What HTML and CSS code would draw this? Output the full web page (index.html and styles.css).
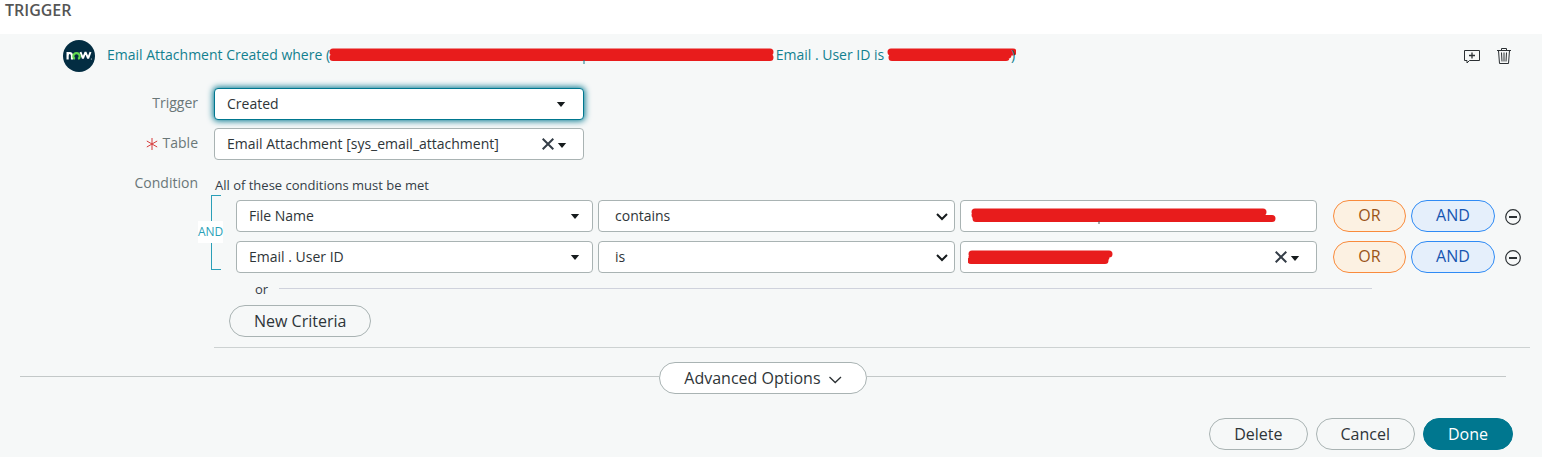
FILE: index.html
```html
<!DOCTYPE html>
<html lang="en">
<head>
    <meta charset="UTF-8">
    <meta name="viewport" content="width=device-width, initial-scale=1.0">
    <title>Trigger</title>
    <link rel="stylesheet" href="styles.css">
</head>
<body>

<h1>TRIGGER</h1>

<form class="panel">
    <div class="summary">
        <svg class="logo" viewBox="0 0 32 32" role="img" aria-label="now">
            <circle cx="16" cy="16" r="16" fill="#032d42"/>
            <g fill="none" stroke="#fff" stroke-width="2.200">
                <path d="M4.600 19.500v-7.500M4.600 16c0-4 4.400-4 4.400 0v3.500"/>
                <path d="M17.500 12l2.400 6.500 2.600-6.500 2.600 6.500 2.400-6.500" stroke-linejoin="bevel" stroke-width="2"/>
            </g>
            <path d="M11.800 19a3.200 3.200 0 1 1 3.400 0" fill="none" stroke="#62d84e" stroke-width="2.200"/>
            <circle cx="28.300" cy="19" r=".5" fill="#fff"/>
        </svg>
        <a href="#" class="summary-text">Email Attachment Created where (<svg class="mark mark-long" viewBox="0 0 447 16">
            <path d="M5 4H442M5 9.500H442" />
            <path class="tick" d="M256 12v4"/>
        </svg> Email . User ID is <svg class="mark mark-short" viewBox="0 0 130 16">
            <path d="M5 4H127M6 9.500H120M7 7H122"/>
        </svg>)</a>
        <button type="button" class="icon-btn" aria-label="Add comment">
            <svg width="16" height="16" viewBox="0 0 16 16" fill="none" stroke="#2b3033">
                <path d="M.5 2.500h15v10H5.500L3 15v-2.500H.5z" stroke-linejoin="round"/>
                <path d="M8 4.500v6M5 7.500h6" stroke-width="1.300"/>
            </svg>
        </button>
        <button type="button" class="icon-btn" aria-label="Delete trigger">
            <svg width="16" height="16" viewBox="0 0 16 16" fill="none" stroke="#2b3033">
                <path d="M1 2.500h14M5.500 2.500v-2h5v2M2.500 2.500l1 13h9l1-13"/>
                <path d="M5.500 4.500l.5 9M8 4.500v9M10.500 4.500l-.5 9"/>
            </svg>
        </button>
    </div>

    <div class="form-row">
        <label for="trigger">Trigger</label>
        <div class="field short">
            <select id="trigger" class="focused">
                <option>Created</option>
                <option>Updated</option>
            </select>
            <svg class="caret" viewBox="0 0 10 6"><path d="M0 0h10L5 6z"/></svg>
        </div>
    </div>

    <div class="form-row">
        <label for="table"><svg class="required" viewBox="0 0 12 12"><path d="M6 0v12M.8 3l10.400 6M11.200 3L.8 9"/></svg>Table</label>
        <div class="field short">
            <input type="text" id="table" value="Email Attachment [sys_email_attachment]">
            <button type="button" class="clear" aria-label="Clear table"><svg viewBox="0 0 12 12"><path d="M.7.7l10.600 10.600M11.300.7L.7 11.300"/></svg></button>
            <svg class="caret" viewBox="0 0 10 6"><path d="M0 0h10L5 6z"/></svg>
        </div>
    </div>

    <div class="form-row">
        <span class="label">Condition</span>
        <div class="conditions">
            <p class="hint">All of these conditions must be met</p>

            <div class="group">
                <div class="bracket"><span>AND</span></div>

                <div class="rules">
                    <div class="rule">
                        <div class="field">
                            <select aria-label="Field 1">
                                <option>File Name</option>
                            </select>
                            <svg class="caret" viewBox="0 0 10 6"><path d="M0 0h10L5 6z"/></svg>
                        </div>
                        <div class="field">
                            <select class="operator" aria-label="Operator 1">
                                <option>contains</option>
                                <option>is</option>
                            </select>
                            <svg class="chevron" viewBox="0 0 12 8"><path d="M1 1l5 5 5-5"/></svg>
                        </div>
                        <div class="field">
                            <input type="text" aria-label="Value 1">
                            <svg class="mark-value" viewBox="0 0 320 16">
                                <path d="M7 4H295M8 10.500H304M7 7H290"/>
                                <path class="tick dark" d="M131 13v3"/>
                            </svg>
                        </div>
                        <button type="button" class="pill or">OR</button>
                        <button type="button" class="pill and">AND</button>
                        <button type="button" class="icon-btn remove" aria-label="Remove condition 1">
                            <svg width="16" height="16" viewBox="0 0 16 16" fill="none" stroke="#2b3033"><circle cx="8" cy="8" r="7.300" stroke-width="1.200"/><path d="M4 8h8" stroke-width="2"/></svg>
                        </button>
                    </div>

                    <div class="rule">
                        <div class="field">
                            <select aria-label="Field 2">
                                <option>Email . User ID</option>
                            </select>
                            <svg class="caret" viewBox="0 0 10 6"><path d="M0 0h10L5 6z"/></svg>
                        </div>
                        <div class="field">
                            <select class="operator" aria-label="Operator 2">
                                <option>is</option>
                                <option>contains</option>
                            </select>
                            <svg class="chevron" viewBox="0 0 12 8"><path d="M1 1l5 5 5-5"/></svg>
                        </div>
                        <div class="field">
                            <input type="text" aria-label="Value 2">
                            <svg class="mark-value" viewBox="0 0 320 16">
                                <path d="M4 5H141M3 11.500H137M4 8H138"/>
                            </svg>
                            <button type="button" class="clear" aria-label="Clear value"><svg viewBox="0 0 12 12"><path d="M.7.7l10.600 10.600M11.300.7L.7 11.300"/></svg></button>
                            <svg class="caret" viewBox="0 0 10 6"><path d="M0 0h10L5 6z"/></svg>
                        </div>
                        <button type="button" class="pill or">OR</button>
                        <button type="button" class="pill and">AND</button>
                        <button type="button" class="icon-btn remove" aria-label="Remove condition 2">
                            <svg width="16" height="16" viewBox="0 0 16 16" fill="none" stroke="#2b3033"><circle cx="8" cy="8" r="7.300" stroke-width="1.200"/><path d="M4 8h8" stroke-width="2"/></svg>
                        </button>
                    </div>
                </div>
            </div>

            <div class="divider">or</div>
            <button type="button" class="pill new-criteria">New Criteria</button>
        </div>
    </div>

    <div class="advanced">
        <button type="button" class="pill">Advanced Options
            <svg width="13" height="8" viewBox="0 0 13 8" fill="none" stroke="#2b3033" stroke-width="1.300"><path d="M.5 1l5.700 5.500L12 1"/></svg>
        </button>
    </div>

    <div class="actions">
        <button type="button" class="pill">Delete</button>
        <button type="button" class="pill">Cancel</button>
        <button type="button" class="pill done">Done</button>
    </div>
</form>

</body>
</html>
```
FILE: styles.css
```css
* {
    box-sizing: border-box;
}

body {
    margin: 0;
    min-height: 100vh;
    display: flex;
    flex-direction: column;
    font-family: "Open Sans", "Noto Sans", sans-serif;
    font-size: 14px;
    color: #2e3538;
    background-color: #fff;
}

h1 {
    margin: 0;
    padding: 0 5px 14px;
    font-size: 16px;
    line-height: 20px;
    font-weight: 600;
    color: #555;
}

.panel {
    flex: 1;
    padding-top: 6px;
    background-color: #f6f8f8;
}

button, input, select {
    font-family: inherit;
    color: inherit;
}

button {
    cursor: pointer;
}

/* summary line */
.summary {
    display: flex;
    align-items: center;
    gap: 16px;
    height: 32px;
    margin-bottom: 16px;
    padding: 0 30px 0 63px;
}

.logo {
    width: 32px;
    height: 32px;
}

.summary-text {
    flex: 1;
    margin-left: -4px;
    padding-bottom: 2px;
    line-height: 20px;
    white-space: nowrap;
    text-decoration: none;
    color: #12808f;
}

.mark, .mark-value {
    height: 16px;
    fill: none;
    stroke: #e81c1c;
    stroke-width: 7;
    stroke-linecap: round;
}

.mark {
    vertical-align: middle;
    margin: 0 -3px 0 -2px;
}

.mark-long {
    width: 447px;
}

.mark-short {
    width: 130px;
    margin-right: -5px;
}

.tick {
    stroke: #12808f;
    stroke-width: 1;
    stroke-linecap: butt;
}

.tick.dark {
    stroke: #555;
}

.icon-btn {
    padding: 0;
    border: none;
    background: none;
}

.icon-btn svg {
    display: block;
}

/* form rows */
.form-row {
    display: grid;
    grid-template-columns: 198px 1fr;
    column-gap: 16px;
    margin-bottom: 8px;
}

.form-row > label, .label {
    line-height: 30px;
    text-align: right;
    color: #6a7778;
}

.required {
    width: 12px;
    height: 12px;
    margin-right: 5px;
    vertical-align: middle;
    fill: none;
    stroke: #d63a3a;
}

.field {
    position: relative;
    flex: 1;
    height: 32px;
}

.field.short {
    width: 370px;
}

.field select, .field input {
    display: block;
    width: 100%;
    height: 32px;
    padding: 0 12px 1px;
    appearance: none;
    border: 1px solid #a9b3b3;
    border-radius: 4px;
    outline: none;
    background-color: #fff;
    font-size: 14px;
}

.field .operator {
    padding-left: 16px;
}

.field .focused {
    border-color: #00778f;
    box-shadow: 0 0 6px 1px #00778f;
}

.caret, .chevron {
    position: absolute;
    top: 14px;
    right: 13px;
    width: 10px;
    height: 5px;
    fill: #161b1d;
    pointer-events: none;
}

.short .caret {
    right: 18px;
}

.chevron {
    top: 13px;
    right: 7px;
    width: 12px;
    height: 8px;
    fill: none;
    stroke: #161b1d;
    stroke-width: 2;
}

.clear {
    position: absolute;
    top: 10px;
    right: 30px;
    width: 12px;
    height: 12px;
    padding: 0;
    border: none;
    background: none;
}

.clear svg {
    display: block;
    fill: none;
    stroke: #343d47;
    stroke-width: 2;
}

.field .clear + .caret {
    top: 15px;
    right: 17px;
}

.mark-value {
    position: absolute;
    top: 8px;
    left: 8px;
    width: 320px;
    pointer-events: none;
}

/* conditions */
.conditions {
    margin-right: 12px;
    padding-bottom: 10px;
    border-bottom: 1px solid #cdd2d2;
}

.hint {
    margin: 0;
    padding: 7px 0 1px 1px;
    font-size: 13px;
    line-height: 20px;
    color: #343d47;
}

.group {
    display: flex;
    padding-right: 9px;
}

.bracket {
    display: flex;
    align-items: center;
    width: 10px;
    margin: -1px 15px 3px -3px;
    border: 1px solid #2a9fb8;
    border-right: none;
}

.bracket span {
    margin: 0 0 2px -14px;
    font-size: 12px;
    line-height: 22px;
    color: #2a9fb8;
    background-color: #fff;
}

.rules {
    flex: 1;
    padding-top: 4px;
}

.rule {
    display: flex;
    gap: 5px;
    margin-bottom: 9px;
}

.rules .rule:last-child {
    margin-bottom: 0;
}

.divider {
    display: flex;
    align-items: center;
    gap: 11px;
    margin: 6px 158px 6px 41px;
    font-size: 13px;
    line-height: 20px;
    color: #343d47;
}

.divider::after {
    content: "";
    flex: 1;
    height: 1px;
    margin-bottom: 2px;
    background-color: #cfd2dc;
}

/* buttons */
.pill {
    height: 32px;
    padding: 0 24px 1px;
    border: 1px solid #a9b3b3;
    border-radius: 16px;
    background-color: transparent;
    font-size: 16px;
    line-height: 20px;
}

.or, .and {
    padding-bottom: 3px;
}

.or {
    width: 73px;
    margin-left: 11px;
    border-color: #f98b3c;
    background-color: #fcf1e2;
    color: #9a5417;
}

.and {
    width: 84px;
    border-color: #2f8bf5;
    background-color: #e5effb;
    color: #1655b0;
}

.remove {
    margin-left: 5px;
    padding-top: 2px;
}

.new-criteria {
    display: block;
    margin-left: 15px;
}

.advanced {
    display: flex;
    align-items: center;
    margin: 14px 36px 24px 20px;
}

.advanced::before, .advanced::after {
    content: "";
    flex: 1;
    height: 1px;
    margin-bottom: 3px;
    background-color: #c3c8c8;
}

.advanced .pill {
    background-color: #fff;
}

.advanced svg {
    margin-left: 4px;
}

.actions {
    display: flex;
    justify-content: flex-end;
    gap: 8px;
    padding-right: 29px;
}

.done {
    border-color: #00778f;
    background-color: #00778f;
    color: #fff;
    font-weight: 500;
}
```
